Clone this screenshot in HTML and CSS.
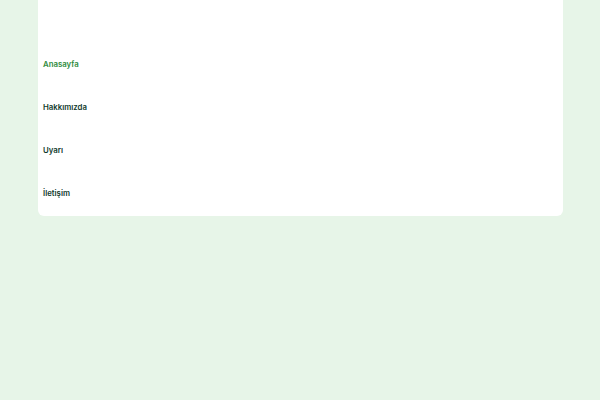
FILE: index.html
```html
<!DOCTYPE html>
<html lang="tr">
<head>
<meta charset="utf-8">
<title>Menü</title>
<link rel="stylesheet" href="styles.css">
</head>
<body>
<nav class="menu">
  <a class="item active" href="#">Anasayfa</a>
  <a class="item" href="#">Hakkımızda</a>
  <a class="item" href="#">Uyarı</a>
  <a class="item" href="#">İletişim</a>
</nav>
</body>
</html>
```
FILE: styles.css
```css
html, body {
  margin: 0;
  padding: 0;
  background: #e7f5e8;
  font-family: Inter, "Noto Sans", sans-serif;
}
.menu {
  margin: 0 37px 0 38px;
  background: #ffffff;
  border-radius: 0 0 6px 6px;
  padding: 42px 0 2px 5px;
  display: flex;
  flex-direction: column;
}
.item {
  height: 43px;
  display: flex;
  align-items: center;
  font-size: 7.8px;
  font-weight: 600;
  color: #0f3a2c;
  text-decoration: none;
}
.item.active {
  color: #2e8b3c;
}
```
